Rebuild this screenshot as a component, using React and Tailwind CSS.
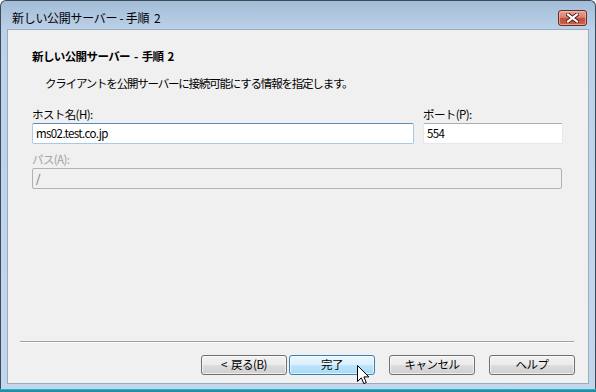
import React from "react";

const font = { fontFamily: '"Noto Sans CJK JP", "Noto Sans", sans-serif' };

function WinButton({ children, hot }) {
  const look = hot
    ? "border-[#3c7fb1] bg-[linear-gradient(#eaf6fd_0%,#d9f0fc_50%,#bee6fd_50%,#a7d9f5_100%)]"
    : "border-[#707070] bg-[linear-gradient(#f2f2f2_0%,#ebebeb_50%,#dddddd_50%,#cfcfcf_100%)]";
  return (
    <button
      className={`w-[86px] h-[20px] rounded-[3px] border ${look} shadow-[inset_0_0_0_1px_#fcfcfcaa] text-[11.5px] tracking-[-0.5px] leading-none text-black flex items-center justify-center whitespace-pre`}
    >
      {children}
    </button>
  );
}

function CloseButton() {
  return (
    <div className="w-[29px] h-[16px] rounded-[3px] border border-[#6b2c22] bg-[linear-gradient(#e8a597_0%,#d7806f_45%,#c24a36_55%,#d0664e_100%)] shadow-[inset_0_0_0_1px_#eec0b6aa] flex items-center justify-center">
      <svg width="13" height="10" viewBox="0 0 13 10">
        <path d="M2 1.5 L11 8.5 M11 1.5 L2 8.5" stroke="#4b1d16" strokeWidth="4" strokeLinecap="square" />
        <path d="M2 1.5 L11 8.5 M11 1.5 L2 8.5" stroke="#ffffff" strokeWidth="2.2" strokeLinecap="square" />
      </svg>
    </div>
  );
}

export default function App() {
  return (
    <div className="w-[596px] h-[392px] bg-white relative overflow-hidden text-black" style={font}>
      <div className="h-full flex flex-col rounded-t-[6px] border border-b-0 border-[#3f4a54] bg-[linear-gradient(#a3bcd7_0px,#bcd2e9_30px,#c2d7ed_100%)]">
        {/* title bar */}
        <div className="h-[28px] shrink-0 flex items-center pt-[6px] pl-[11px] pr-[8px]">
          <span className="text-[12px] leading-[16px] flex-1 tracking-[-0.3px] whitespace-pre">新しい公開サーバー - 手順  2</span>
          <CloseButton />
        </div>

        {/* client area */}
        <div className="mx-[6px] h-[355px] shrink-0 border border-[#9aabbd] bg-[#f0f0f0] flex flex-col text-[11.5px] tracking-[-0.6px]">
          <div className="pl-[24px] pt-[18px] flex flex-col">
            <div className="leading-[16px] font-bold whitespace-pre">新しい公開サーバー  -  手順  2</div>
            <div className="leading-[16px] mt-[11px] pl-[13px] tracking-[-1.2px]">
              クライアントを公開サーバーに接続可能にする情報を指定します。
            </div>

            <div className="flex gap-[9px] mt-[15px]">
              <div className="flex flex-col w-[382px]">
                <label className="leading-[16px]">ホスト名(H):</label>
                <div className="mt-[1px] h-[21px] rounded-[2px] border border-[#a9c9e6] border-t-[#5d8cb8] bg-white flex items-center px-[3px]">
                  ms02.test.co.jp
                </div>
              </div>
              <div className="flex flex-col w-[140px]">
                <label className="leading-[16px]">ポート(P):</label>
                <div className="mt-[1px] h-[21px] rounded-[2px] border border-[#e3e9ef] border-t-[#abadb3] bg-white flex items-center px-[3px]">
                  554
                </div>
              </div>
            </div>

            <div className="flex flex-col w-[530px] mt-[7px]">
              <label className="leading-[16px] text-[#a3a3a3]">パス(A):</label>
              <div className="mt-[1px] h-[21px] rounded-[2px] border border-[#adb2b5] bg-[#f0f0f0] flex items-center px-[3px] text-[#6d6d6d]">
                /
              </div>
            </div>
          </div>

          <div className="flex-1" />

          <div className="ml-[12px] mr-[14px] h-[2px] border-t border-[#a0a0a0] border-b border-b-white" />

          <div className="flex justify-end pr-[13px] pt-[12px] pb-[8px]">
            <WinButton>{"<  戻る(B)"}</WinButton>
            <div className="ml-[2px]">
              <WinButton hot>完了</WinButton>
            </div>
            <div className="ml-[14px]">
              <WinButton>キャンセル</WinButton>
            </div>
            <div className="ml-[14px]">
              <WinButton>ヘルプ</WinButton>
            </div>
          </div>
        </div>

        <div className="h-[5px] shrink-0" />
      </div>
      <div className="absolute left-0 right-0 bottom-0 h-[3px] bg-[#1e8fa6] border-t border-[#2ab0c6]" />

      {/* mouse pointer */}
      <svg className="absolute left-[357px] top-[365px]" width="13" height="20" viewBox="0 0 13 20">
        <path
          d="M0.5 0.5 L0.5 16.5 L4.3 12.8 L6.8 18.6 L9.3 17.6 L6.9 11.9 L11.9 11.9 Z"
          fill="#ffffff"
          stroke="#000000"
          strokeWidth="1"
          strokeLinejoin="miter"
        />
      </svg>
    </div>
  );
}
